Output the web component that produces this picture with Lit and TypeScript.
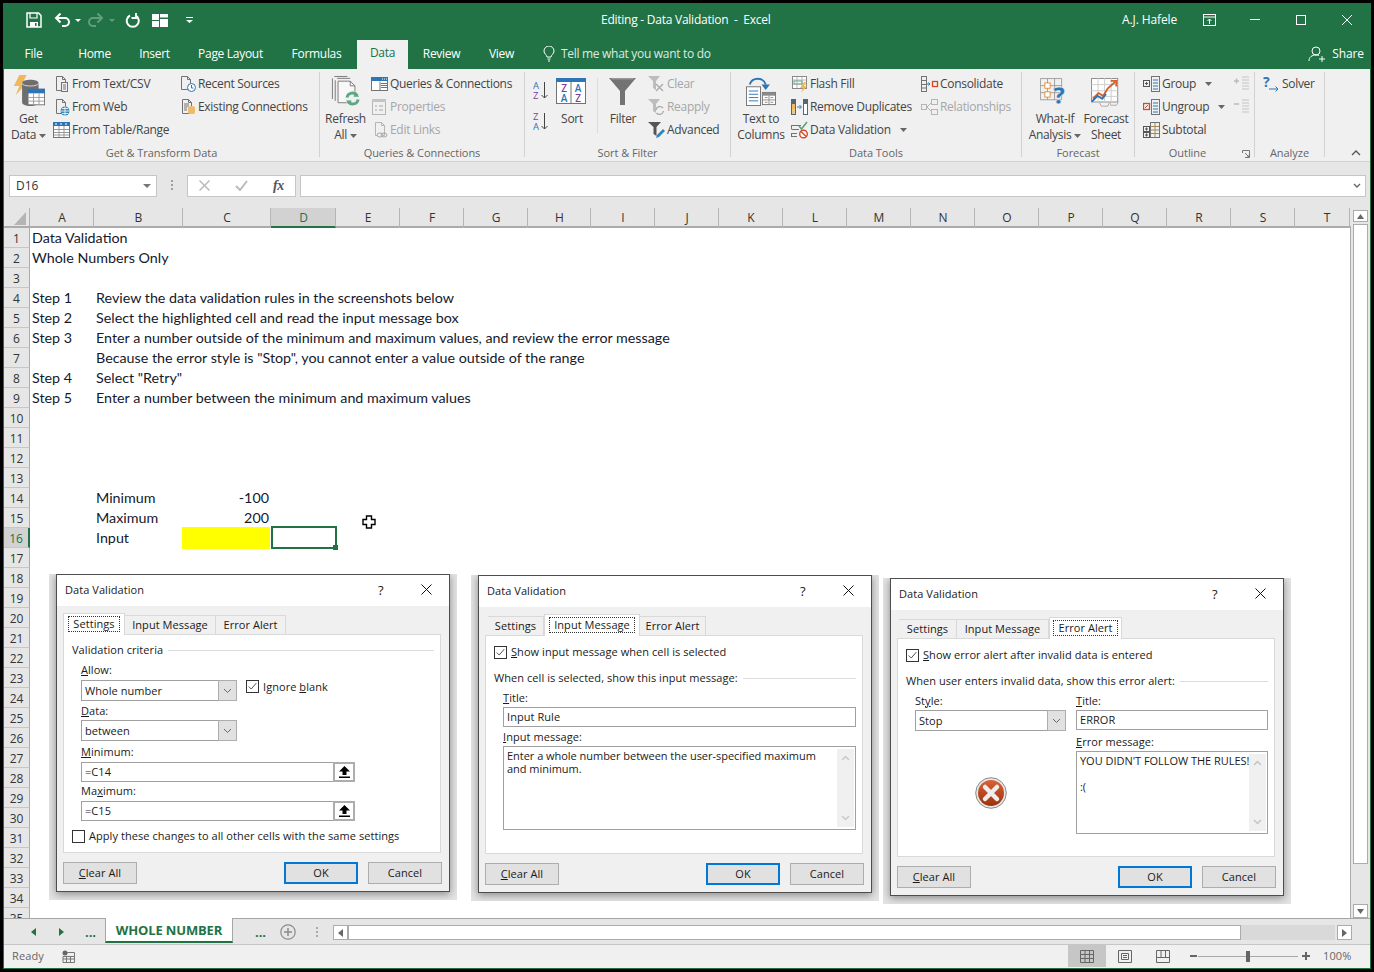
import { LitElement, html, css, nothing } from "lit";
import { customElement, property } from "lit/decorators.js";

const icons: Record<string, unknown> = {
  fromText: html`<svg width="18" height="18" viewBox="0 0 18 18" fill="none"><path d="M3.500 1.500h6l3 3v11h-9zM9.500 1.500v3h3" stroke="#737373"/><rect x="8.500" y="7.500" width="6" height="9" fill="#f0f0f0" stroke="#737373"/><path d="M10 10h3M10 12h3M10 14h3" stroke="#737373"/></svg>`,
  fromWeb: html`<svg width="18" height="18" viewBox="0 0 18 18" fill="none"><path d="M3.500 1.500h6l3 3v11h-9zM9.500 1.500v3h3" stroke="#737373"/><circle cx="12" cy="13" r="4.500" fill="#3a87b5"/><path d="M7.500 13h9M12 8.500v9M9 10.500h6M9 15.500h6" stroke="#fff" stroke-width=".8"/></svg>`,
  fromTable: html`<svg width="18" height="18" viewBox="0 0 18 18" fill="none"><rect x=".5" y="1.500" width="16" height="15" fill="#fff" stroke="#737373"/><rect x="0" y="1" width="17" height="4" fill="#2e75b6"/><path d="M2 3h2M7 3h2M12 3h2" stroke="#fff"/><path d="M1 8.500h15M1 11.500h15M1 14h15M6 5v11M11 5v11" stroke="#999"/></svg>`,
  recent: html`<svg width="18" height="18" viewBox="0 0 18 18" fill="none"><path d="M2.500 1.500h6l3 3v10h-9zM8.500 1.500v3h3" stroke="#737373"/><circle cx="12.500" cy="12.500" r="4" fill="#fff" stroke="#2e75b6"/><path d="M12.500 10v3h2" stroke="#2e75b6"/></svg>`,
  existing: html`<svg width="18" height="18" viewBox="0 0 18 18" fill="none"><path d="M3.500 1.500h6l3 3v11h-9zM9.500 1.500v3h3" stroke="#737373"/><path d="M5 6h5M5 8h5M5 10h3M5 12h3" stroke="#737373"/><path d="M9 9.500a3.500 1.500 0 0 1 7 0v5a3.500 1.500 0 0 1-7 0z" fill="#eebb6c"/></svg>`,
  queries: html`<svg width="18" height="18" viewBox="0 0 18 18" fill="none"><rect x=".5" y="2.500" width="16" height="13" fill="#fff" stroke="#737373"/><rect x="0" y="2" width="17" height="4" fill="#2e75b6"/><path d="M9 6.500v9M10 8.500h6M10 10.500h6M10 12.500h6" stroke="#737373"/><path d="M11 4h1M13 4h1M15 4h1" stroke="#fff"/></svg>`,
  properties: html`<svg width="18" height="18" viewBox="0 0 18 18" fill="none"><rect x="1.500" y="1.500" width="13" height="15" stroke="#b5b5b5"/><rect x="1" y="1" width="14" height="3" fill="#c4c4c4"/><path d="M4 8h2M4 12h2M8 8h4M8 12h4" stroke="#a8a8a8"/></svg>`,
  editLinks: html`<svg width="18" height="18" viewBox="0 0 18 18" fill="none"><path d="M4.500 1.500h6l3 3v10h-9zM10.500 1.500v3h3" stroke="#b5b5b5"/><ellipse cx="9" cy="14" rx="3" ry="2" fill="#f0f0f0" stroke="#a8a8a8"/><ellipse cx="13" cy="14" rx="3" ry="2" fill="none" stroke="#a8a8a8"/></svg>`,
  azSmall: html`<svg width="16" height="24" viewBox="0 0 16 24" fill="none"><text font-family="Open Sans" font-size="9.500"><tspan x="0" y="9" fill="#2e75b6">A</tspan><tspan x="0" y="18.500" fill="#7b3f98">Z</tspan></text><path d="M11.500 2v16M8.500 15l3 3 3-3" stroke="#444"/></svg>`,
  zaSmall: html`<svg width="16" height="24" viewBox="0 0 16 24" fill="none"><text font-family="Open Sans" font-size="9.500"><tspan x="0" y="9" fill="#7b3f98">Z</tspan><tspan x="0" y="18.500" fill="#2e75b6">A</tspan></text><path d="M11.500 2v16M8.500 15l3 3 3-3" stroke="#444"/></svg>`,
  clear: html`<svg width="18" height="18" viewBox="0 0 18 18" fill="none"><path d="M0 1h12l-4 5v9l-3-2V6z" fill="#bdbdbd"/><path d="M8 9l7 7M15 9l-7 7" stroke="#a8a8a8" stroke-width="1.300"/></svg>`,
  reapply: html`<svg width="18" height="18" viewBox="0 0 18 18" fill="none"><path d="M0 1h12l-4 5v9l-3-2V6z" fill="#bdbdbd"/><path d="M8 12a4 4 0 0 1 7-2M15.500 13a4 4 0 0 1-7 2" stroke="#a8a8a8" stroke-width="1.300"/></svg>`,
  advanced: html`<svg width="18" height="18" viewBox="0 0 18 18" fill="none"><path d="M0 1h13l-4.500 5v9l-3-2V6z" fill="#555"/><path d="M8 17l1-3 6-6 2 2-6 6z" fill="#2e86c1"/></svg>`,
  flash: html`<svg width="18" height="18" viewBox="0 0 18 18" fill="none"><rect x="1.500" y="1.500" width="14" height="12" fill="#fff" stroke="#8a8a8a"/><path d="M2 5h13M2 9h13M6 2v11M11 2v11" stroke="#b9b9b9"/><rect x="3" y="6" width="8" height="3" fill="none" stroke="#6aa887"/><path d="M13 7l-4 6h3l-2 5 6-7h-3l2-4z" fill="#efb85b"/></svg>`,
  removeDup: html`<svg width="18" height="18" viewBox="0 0 18 18" fill="none"><rect x="0" y="1" width="5" height="16" fill="#51667e"/><rect x="1" y="6" width="3" height="5" fill="#f0b85e"/><rect x="1" y="11" width="3" height="5" fill="#f0c77e"/><rect x="12" y="1" width="5" height="16" fill="#51667e"/><rect x="13" y="6" width="3" height="5" fill="#fff"/><rect x="13" y="11" width="3" height="5" fill="#fff"/><path d="M6 9h4M8.500 7l2 2-2 2" stroke="#2e75b6"/></svg>`,
  dataVal: html`<svg width="18" height="18" viewBox="0 0 18 18" fill="none"><path d="M1 4.500h9M1 8.500h7M1 12.500h5M1 15.500h5M.5 4v4.500M.5 12v4" stroke="#737373"/><path d="M8 5l2.500 3L16 1" stroke="#5aa07a" stroke-width="1.500"/><circle cx="12.500" cy="13" r="3.800" fill="#fff" stroke="#d2492a" stroke-width="1.400"/><path d="M10 10.500l5 5" stroke="#d2492a" stroke-width="1.400"/></svg>`,
  consolidate: html`<svg width="18" height="18" viewBox="0 0 18 18" fill="none"><rect x=".5" y="1.500" width="5" height="15" stroke="#737373"/><path d="M1 5.500h4M1 9.500h4M1 13h4" stroke="#737373"/><path d="M6 9h3M7.500 7.500L9 9l-1.500 1.500" stroke="#2e75b6"/><rect x="11.500" y="6.500" width="5" height="5" stroke="#d2492a" stroke-width="1.300"/></svg>`,
  relationships: html`<svg width="18" height="18" viewBox="0 0 18 18" fill="none"><rect x=".5" y="6.500" width="5" height="5" stroke="#b5b5b5"/><rect x="10.500" y="1.500" width="6" height="5" stroke="#b5b5b5"/><rect x="10.500" y="11.500" width="6" height="5" stroke="#b5b5b5"/><path d="M6 9l4-4M6 9l4 4" stroke="#b5b5b5"/></svg>`,
  group: html`<svg width="18" height="18" viewBox="0 0 18 18" fill="none"><rect x=".5" y="5.500" width="6" height="6" stroke="#555"/><path d="M2 8.500h3M3.500 7v3" stroke="#555"/><rect x="8.500" y="1.500" width="8" height="15" stroke="#737373"/><path d="M10 5h5M10 8h5M10 11h5M10 14h5" stroke="#2e75b6"/></svg>`,
  ungroup: html`<svg width="18" height="18" viewBox="0 0 18 18" fill="none"><rect x=".5" y="5.500" width="6" height="6" stroke="#d2492a" stroke-width="1.300"/><path d="M2 10l3-3" stroke="#d2492a"/><rect x="8.500" y="1.500" width="8" height="15" stroke="#737373"/><path d="M10 5h5M10 8h5M10 11h5M10 14h5" stroke="#2e75b6"/></svg>`,
  subtotal: html`<svg width="18" height="18" viewBox="0 0 18 18" fill="none"><rect x=".5" y="5.500" width="6" height="5" stroke="#555"/><rect x=".5" y="11.500" width="6" height="5" stroke="#555"/><path d="M2 8h3M3.500 6.500v3M2 14h3M3.500 12.500v3" stroke="#555"/><rect x="7.500" y="1.500" width="9" height="15" stroke="#737373"/><path d="M8 5.500h8M8 9h8M8 12.500h8M12 2v14" stroke="#a08a5a"/></svg>`,
  showD: html`<svg width="18" height="18" viewBox="0 0 18 18" fill="none"><path d="M1 6h5M3.500 3.500v5" stroke="#bbb" stroke-width="1.500"/><path d="M9 2h7M9 5h7M9 8h7M9 11h7M9 14h7" stroke="#c4c4c4"/></svg>`,
  hideD: html`<svg width="18" height="18" viewBox="0 0 18 18" fill="none"><path d="M1 6h5" stroke="#bbb" stroke-width="1.500"/><path d="M9 2h7M9 5h7M9 8h7M9 11h7M9 14h7" stroke="#c4c4c4"/></svg>`,
  solver: html`<svg width="18" height="18" viewBox="0 0 18 18" fill="none" style="overflow:visible"><text x="0" y="12" font-family="Open Sans" font-size="14" font-weight="700" fill="#2e75b6">?</text><path d="M6 14h9M12.500 11.500L15 14l-2.500 2.500" stroke="#2e75b6"/></svg>`,
  getData: html`<svg width="33" height="33" viewBox="0 0 36 36" fill="none"><path d="M8 0h8l-4 8h5L4 22l4-10H2z" fill="#efb85b"/><path d="M11 9c0-5 18-5 18 0v21c0 5-18 5-18 0z" fill="#6e6e6e"/><path d="M11 9c0 4 18 4 18 0" stroke="#ddd"/><rect x="17.500" y="15.500" width="18" height="17" fill="#fff" stroke="#737373"/><rect x="17" y="15" width="19" height="5" fill="#2e75b6"/><path d="M18 24.500h17M18 28.500h17M23.500 20v12M29.500 20v12" stroke="#999"/></svg>`,
  refresh: html`<svg width="30" height="32" viewBox="0 0 32 34" fill="none"><path d="M3.500 1.500h14M1.500 3.500v22" stroke="#777"/><path d="M6.500 3.500h14M4.500 5.500v22" stroke="#777"/><path d="M7.500 6.500h13l5 5v18h-18z" fill="#f8f8f8" stroke="#777"/><path d="M20.500 6.500v5h5" stroke="#777"/><circle cx="23" cy="25" r="8" fill="#f0f0f0"/><path d="M17 24a6 6 0 0 1 11-2M29 26a6 6 0 0 1-11 2" stroke="#5fa884" stroke-width="3"/><path d="M26 18l4 5h-6zM20 32l-4-5h6z" fill="#5fa884"/></svg>`,
  sort: html`<svg width="32" height="28" viewBox="0 0 32 28" fill="none"><rect x=".5" y="1.500" width="29" height="24" fill="#fff" stroke="#737373"/><rect x="0" y="0" width="30" height="4" fill="#2e75b6"/><path d="M15 4v21" stroke="#737373"/><text text-anchor="middle" font-family="Open Sans" font-size="10" font-weight="600"><tspan x="8" y="14" fill="#7b3f98">Z</tspan><tspan x="8" y="24" fill="#2e75b6">A</tspan><tspan x="22" y="14" fill="#2e75b6">A</tspan><tspan x="22" y="24" fill="#7b3f98">Z</tspan></text></svg>`,
  filter: html`<svg width="28" height="28" viewBox="0 0 28 28" fill="none"><path d="M0 0h27l-11 13v14h-5V13z" fill="#737373"/><path d="M2 0h23l-1 1.500H3z" fill="#999"/></svg>`,
  textCols: html`<svg width="30" height="32" viewBox="0 0 32 34" fill="none"><path d="M4 10a9 9 0 0 1 17 0" stroke="#2e75b6" stroke-width="2"/><path d="M16.500 10h9l-4.500 6z" fill="#2e75b6"/><rect x=".5" y="12.500" width="15" height="20" fill="#fff" stroke="#737373"/><path d="M3 17h10M3 20.500h10M3 24h10M3 27.500h10" stroke="#2e75b6"/><rect x="17.500" y="18.500" width="14" height="13" fill="#fff" stroke="#737373"/><rect x="18" y="19" width="13" height="3" fill="#8a8a8a"/><path d="M18 26.500h13M24.500 22v9M20 24h3M26 24h3M20 29h3M26 29h3" stroke="#8a8a8a"/></svg>`,
  whatIf: html`<svg width="30" height="32" viewBox="0 0 34 36" fill="none"><path d="M.5.5h24v24H.5zM8.500.5v24M16.500.5v24M.5 8.500h24M.5 16.500h24" stroke="#999"/><rect x="5.500" y="5.500" width="6" height="6" fill="#fff" stroke="#e08a2e"/><rect x="5.500" y="15.500" width="6" height="6" fill="#fff" stroke="#e08a2e"/><text x="15" y="29" font-family="Open Sans" font-size="26" font-weight="800" fill="#2e75b6" stroke="#f0f0f0" stroke-width=".5">?</text></svg>`,
  forecast: html`<svg width="30" height="32" viewBox="0 0 32 34" fill="none"><rect x=".5" y=".5" width="28" height="25" fill="#fff" stroke="#8a8a8a"/><path d="M.5 7h28M.5 13.500h28M.5 19.500h28M7.500 0v26M14.500 0v26M21.500 0v26" stroke="#ccc"/><path d="M2 22l6-6 5 3 5-8 8-7" stroke="#d2612a" stroke-width="2"/><path d="M21 3h6v6" stroke="#d2612a" stroke-width="2"/><path d="M1 25l6-6 5 3 4-5" stroke="#2e75b6" stroke-width="2"/><path d="M9 26l2 4h7l1-3M20 26l1 3h6l2-3" stroke="#aaa"/></svg>`,
};
const caret = html`<svg class="caret" width="7" height="4" viewBox="0 0 7 4"><path d="M0 0h7L3.500 4z" fill="#666"/></svg>`;

const ROWS: Record<number, { a?: string; b?: string; c?: string }> = {
  1: { a: "Data Validation" }, 2: { a: "Whole Numbers Only" },
  4: { a: "Step 1", b: "Review the data validation rules in the screenshots below" },
  5: { a: "Step 2", b: "Select the highlighted cell and read the input message box" },
  6: { a: "Step 3", b: "Enter a number outside of the minimum and maximum values, and review the error message" },
  7: { b: 'Because the error style is "Stop", you cannot enter a value outside of the range' },
  8: { a: "Step 4", b: 'Select "Retry"' },
  9: { a: "Step 5", b: "Enter a number between the minimum and maximum values" },
  14: { b: "Minimum", c: "-100" }, 15: { b: "Maximum", c: "200" }, 16: { b: "Input" },
};
const COLS: [string, number, number][] = [["A", 64, 1], ["B", 89, 1], ["C", 88, 1], ["D", 65, 1], ["E", 64, 1], ["F", 64, 1], ["G", 64, 1], ["H", 63, 1], ["I", 64, 1], ["J", 64, 1], ["K", 64, 1], ["L", 64, 1], ["M", 64, 1], ["N", 64, 1], ["O", 64, 1], ["P", 64, 1], ["Q", 64, 1], ["R", 64, 1], ["S", 64, 1], ["T", 55, 10]];
const TABS: [string, number, number][] = [["File", 59, 0], ["Home", 63, 0], ["Insert", 57, 0], ["Page Layout", 95, 0], ["Formulas", 77, 0], ["Data", 51, 2], ["Review", 67, 0], ["View", 53, 0]];

type Row = [string, string, boolean?, boolean?];

@customElement("dv-dialog")
class DvDialog extends LitElement {
  @property() tab = "settings";
  static styles = css`
    :host { display: block; font: 11px/14px "Open Sans", sans-serif; color: #1a1a1a; letter-spacing: .06px; }
    .win { margin-left: 7px; width: 394px; height: 318px; box-sizing: border-box; border: 1px solid #4d4d4d; background: #f0f0f0; box-shadow: 0 2px 8px rgba(0,0,0,.4); }
    .head { height: 31px; padding-bottom: 2px; box-sizing: border-box; background: #fff; display: flex; align-items: center; padding-left: 8px; }
    .head .t { flex: 1; }
    .head .q { width: 43px; font-size: 13px; }
    .head svg { margin-right: 17px; }
    .tabs { height: 28px; display: flex; align-items: flex-end; padding-left: 6px; position: relative; z-index: 1; }
    .tab { height: 19px; box-sizing: border-box; border-top: 1px solid #d9d9d9; border-right: 1px solid #d9d9d9; display: flex; align-items: center; justify-content: center; background: #f0f0f0; flex: none; }
    .tab.on { height: 22px; background: #fff; border-left: 1px solid #d9d9d9; margin-bottom: -1px; padding-bottom: 2px; }
    .tab.on span { outline: 1px dotted #333; padding: 0 4px; }
    .panel { margin-left: 6px; width: 378px; height: 219px; box-sizing: border-box; border: 1px solid #d9d9d9; background: #fff; padding: 0 8px; }
    .foot { display: flex; margin: 9px 0 0 6px; width: 379px; }
    .btn { width: 74px; height: 22px; box-sizing: border-box; border: 1px solid #adadad; background: #e1e1e1; display: flex; align-items: center; justify-content: center; }
    .btn.ok { border: 2px solid #0078d7; margin-left: auto; margin-right: 10px; }
    .sec { display: flex; align-items: center; gap: 5px; white-space: nowrap; }
    .sec i { flex: 1; height: 1px; background: #dcdcdc; margin-right: -2px; }
    .ind { padding-left: 9px; }
    .lb { display: block; white-space: nowrap; }
    .cb { display: flex; align-items: center; gap: 4px; white-space: nowrap; height: 14px; }
    .box { width: 13px; height: 13px; box-sizing: border-box; border: 1px solid #333; background: #fff; flex: none; display: block; }
    .combo { display: flex; box-sizing: border-box; height: 21px; border: 1px solid #a0a0a0; background: #fff; align-items: center; padding-left: 3px; }
    .combo span { flex: 1; }
    .combo b { width: 17px; height: 19px; background: #e1e1e1; box-shadow: 0 0 0 1px #adadad; display: flex; align-items: center; justify-content: center; }
    .inp { display: flex; box-sizing: border-box; height: 20px; border: 1px solid #a0a0a0; background: #fff; align-items: center; padding-left: 3px; }
    .ref { display: flex; align-items: center; }
    .ref .inp { width: 252px; border-right: 0; }
    .ref b { width: 22px; height: 20px; box-sizing: border-box; border: 2px solid #adadad; background: #fff; display: flex; align-items: center; justify-content: center; }
    .ta { box-sizing: border-box; border: 1px solid #a0a0a0; background: #fff; padding: 2px 0 0 3px; position: relative; line-height: 13px; white-space: pre-wrap; letter-spacing: -.03px; }
    .sb { position: absolute; right: 1px; top: 2px; bottom: 2px; width: 17px; background: #f0f0f0; display: flex; flex-direction: column; justify-content: space-between; align-items: center; padding: 6px 0; box-sizing: border-box; }
    .err { display: flex; }
    .err .l { width: 161px; flex: none; }
    .err .r { width: 192px; flex: none; }
    u { text-underline-offset: 1px; }
  `;
  private chev = html`<svg width="9" height="6" viewBox="0 0 9 6" fill="none"><path d="M1 1l3.500 3.500L8 1" stroke="#666"/></svg>`;
  private check = html`<svg class="box" viewBox="0 0 13 13" fill="none"><path d="M2 6.500l3 3 6-7" stroke="#333"/></svg>`;
  private up = html`<svg width="11" height="12" viewBox="0 0 11 12"><path d="M5.500 0L11 5.500H7.500V9h-4V5.500H0zM0 10.500h11V12H0z" fill="#000"/></svg>`;
  private sbar(dim = "#c9c9c9") {
    return html`<div class="sb"><svg width="9" height="6" viewBox="0 0 9 6" fill="none"><path d="M1 5l3.500-3.500L8 5" stroke=${dim} stroke-width="1.500"/></svg><svg width="9" height="6" viewBox="0 0 9 6" fill="none"><path d="M1 1l3.500 3.500L8 1" stroke=${dim} stroke-width="1.500"/></svg></div>`;
  }
  private settings() {
    return html`
      <div class="sec" style="padding-top:8px"><span>Validation criteria</span><i></i></div>
      <div class="ind">
        <span class="lb" style="margin-top:6px"><u>A</u>llow:</span>
        <div style="display:flex;margin-top:3px">
          <div class="combo" style="width:156px"><span>Whole number</span><b>${this.chev}</b></div>
          <div class="cb" style="margin-left:9px;height:13px;margin-top:0;align-items:flex-start">${this.check}<span><span>Ignore </span><u>b</u>lank</span></div>
        </div>
        <span class="lb" style="margin-top:3px"><u>D</u>ata:</span>
        <div class="combo" style="width:156px;margin-top:2px"><span>between</span><b>${this.chev}</b></div>
        <span class="lb" style="margin-top:4px"><u>M</u>inimum:</span>
        <div class="ref" style="margin-top:3px"><div class="inp">=C14</div><b>${this.up}</b></div>
        <span class="lb" style="margin-top:2px">Ma<u>x</u>imum:</span>
        <div class="ref" style="margin-top:3px"><div class="inp">=C15</div><b>${this.up}</b></div>
      </div>
      <div class="cb" style="margin-top:8px"><span class="box"></span><span>Apply these changes to all other cells with the same settings</span></div>
    `;
  }
  private input() {
    return html`
      <div class="cb" style="margin-top:9px">${this.check}<span><u>S</u>how input message when cell is selected</span></div>
      <div class="sec" style="margin-top:12px"><span>When cell is selected, show this input message:</span><i></i></div>
      <div class="ind">
        <span class="lb" style="margin-top:6px"><u>T</u>itle:</span>
        <div class="inp" style="margin-top:2px;width:353px">Input Rule</div>
        <span class="lb" style="margin-top:3px"><u>I</u>nput message:</span>
        <div class="ta" style="margin-top:2px;width:353px;height:84px;padding-right:26px">Enter a whole number between the user-specified maximum and minimum.${this.sbar()}</div>
      </div>
    `;
  }
  private error() {
    return html`
      <div class="cb" style="margin-top:9px">${this.check}<span><u>S</u>how error alert after invalid data is entered</span></div>
      <div class="sec" style="margin-top:12px"><span>When user enters invalid data, show this error alert:</span><i></i></div>
      <div class="ind err">
        <div class="l">
          <span class="lb" style="margin-top:6px">St<u>y</u>le:</span>
          <div class="combo" style="width:151px;margin-top:2px"><span>Stop</span><b>${this.chev}</b></div>
          <svg style="display:block;margin:46px 0 0 60px" width="32" height="32" viewBox="0 0 32 32"><defs><linearGradient id="eg" x1="0" y1="0" x2="0" y2="1"><stop offset="0" stop-color="#d9623a"/><stop offset="1" stop-color="#9c3208"/></linearGradient></defs><circle cx="16" cy="16" r="15.300" fill="#e8e8e8" stroke="#8a8a8a"/><circle cx="16" cy="16" r="13" fill="url(#eg)"/><path d="M10 10l12 12M22 10L10 22" stroke="#eee" stroke-width="4.500" stroke-linecap="round"/></svg>
        </div>
        <div class="r">
          <span class="lb" style="margin-top:6px"><u>T</u>itle:</span>
          <div class="inp" style="margin-top:2px">ERROR</div>
          <span class="lb" style="margin-top:5px"><u>E</u>rror message:</span>
          <div class="ta" style="margin-top:2px;height:83px">YOU DIDN'T FOLLOW THE RULES!

:(${this.sbar("#c4c4c4")}</div>
        </div>
      </div>
    `;
  }
  render() {
    const t = this.tab;
    const setW = t === "settings" ? "width:62px" : t === "input" ? "width:56px;margin-left:3px" : "width:58px;margin-left:2px";
    const inW = t === "input" ? "width:96px" : t === "settings" ? "width:91px" : "width:92px";
    const erW = t === "error" ? "width:73px" : t === "settings" ? "width:70px" : "width:66px";
    return html`<div class="win">
      <div class="head"><span class="t">Data Validation</span><span class="q">?</span><svg width="11" height="11" viewBox="0 0 11 11" fill="none"><path d="M.5.5l10 10M10.500.5l-10 10" stroke="#111"/></svg></div>
      <div class="tabs">
        <div class="tab ${t === "settings" ? "on" : ""}" style=${setW}><span>Settings</span></div>
        <div class="tab ${t === "input" ? "on" : ""}" style=${inW}><span>Input Message</span></div>
        <div class="tab ${t === "error" ? "on" : ""}" style=${erW}><span>Error Alert</span></div>
      </div>
      <div class="panel">${t === "settings" ? this.settings() : t === "input" ? this.input() : this.error()}</div>
      <div class="foot"><div class="btn"><span><u>C</u>lear All</span></div><div class="btn ok">OK</div><div class="btn">Cancel</div></div>
    </div>`;
  }
}

@customElement("app-root")
class AppRoot extends LitElement {
  static styles = css`
    :host { display: block; position: relative; width: 1374px; height: 972px; background: #000; padding: 3px; box-sizing: border-box; font: 12px/16px "Open Sans", sans-serif; color: #444; overflow: hidden; letter-spacing: -.3px; }
    .app { width: 1368px; height: 966px; box-sizing: border-box; border: 1px solid #217346; border-top: 0; display: flex; flex-direction: column; background: #e6e6e6; }
    .title { height: 37px; padding-bottom: 3px; box-sizing: border-box; background: #217346; color: #fff; display: flex; align-items: center; flex: none; position: relative; letter-spacing: -.25px; }
    .qat { display: flex; align-items: center; width: 597px; flex: none; }
    .qi { display: flex; align-items: center; justify-content: center; flex: none; }
    .ttl { width: 300px; flex: none; white-space: pre; }
    .user { margin-left: 221px; width: 73px; letter-spacing: -.1px; }
    .win-btn { width: 46px; display: flex; justify-content: center; flex: none; }
    .tabs { height: 29px; background: #217346; color: #fff; display: flex; align-items: flex-end; flex: none; }
    .tb { height: 29px; display: flex; align-items: center; justify-content: center; flex: none; padding-bottom: 2px; box-sizing: border-box; }
    .tb.on { background: #f0f0f0; color: #217346; height: 30px; padding-bottom: 3px; }
    .tell { margin-left: 15px; display: flex; align-items: center; gap: 6px; height: 29px; padding-bottom: 2px; box-sizing: border-box; color: #dcebe3; flex: 1; }
    .share { display: flex; align-items: center; gap: 6px; height: 29px; padding-bottom: 2px; box-sizing: border-box; margin-right: 6px; letter-spacing: -.1px; }
    .ribbon { height: 93px; flex: none; background: #f0f0f0; border-bottom: 1px solid #d2d2d2; box-sizing: border-box; display: flex; padding-top: 3px; position: relative; }
    .grp { height: 85px; border-right: 1px solid #d2d2d2; box-sizing: border-box; flex: none; display: flex; flex-direction: column; position: relative; }
    .gb { height: 70px; display: flex; flex: none; }
    .gl { text-align: center; margin-top: 4px; line-height: 14px; font-size: 11px; color: #666; letter-spacing: -.05px; }
    .big { display: flex; flex-direction: column; align-items: center; flex: none; }
    .bi { height: 39px; padding-top: 3px; box-sizing: border-box; display: flex; align-items: flex-start; justify-content: center; flex: none; }
    .bi.low { padding-top: 6px; }
    .bl { text-align: center; line-height: 16px; white-space: nowrap; }
    .col { display: flex; flex-direction: column; flex: none; }
    .sm { height: 23px; display: flex; align-items: center; white-space: nowrap; }
    .sm svg { flex: none; }
    .sm .x { margin-left: 1px; }
    .sm.dis { color: #a6a6a6; }
    .caret { margin-left: 3px; vertical-align: middle; }
    .sm .caret { margin-left: 9px; }
    .sep { width: 1px; height: 55px; margin: 6px 0 0 0; background: #dcdcdc; flex: none; }
    .fbar { height: 46px; flex: none; display: flex; align-items: center; padding-top: 1px; box-sizing: border-box; background: #e6e6e6; }
    .namebox { width: 148px; height: 22px; margin-left: 5px; box-sizing: border-box; border: 1px solid #c6c6c6; background: #fff; display: flex; align-items: center; padding: 0 5px 0 6px; color: #333; justify-content: space-between; letter-spacing: 0; }
    .dots { width: 30px; display: flex; justify-content: center; flex: none; }
    .fxb { width: 109px; height: 22px; box-sizing: border-box; border: 1px solid #c6c6c6; background: #fff; display: flex; align-items: center; flex: none; justify-content: space-between; padding: 0 11px; }
    .fx { font: italic 700 14px "Liberation Serif", serif; color: #555; }
    .finput { width: 1066px; height: 22px; margin-left: 4px; box-sizing: border-box; border: 1px solid #c6c6c6; background: #fff; display: flex; align-items: center; justify-content: flex-end; padding-right: 4px; flex: none; }
    .sheet { height: 710px; flex: none; display: flex; background: #fff; }
    .main { width: 1347px; flex: none; display: flex; flex-direction: column; }
    .chead { height: 20px; display: flex; flex: none; background: #e6e6e6; box-sizing: border-box; border-bottom: 2px solid #ababab; }
    .corner { width: 26px; flex: none; border-right: 1px solid #b0b0b0; box-sizing: border-box; display: flex; align-items: flex-end; justify-content: flex-end; padding: 0 3px 1px 0; }
    .ch { box-sizing: border-box; border-right: 1px solid #b5b5b5; text-align: center; line-height: 19px; flex: none; color: #333; height: 20px; letter-spacing: 0; }
    .ch.on { background: #d2d2d2; border-bottom: 2px solid #217346; color: #217346; }
    .grid { flex: 1; overflow: hidden; border-right: 1px solid #ababab; }
    .row { height: 20px; display: grid; grid-template-columns: 26px 64px 89px 88px 65px 1fr; font: 14.3px/20px Lato, sans-serif; color: #14192b; letter-spacing: 0; }
    .rh { background: #e6e6e6; border-right: 1px solid #ababab; border-bottom: 1px solid #c6c6c6; box-sizing: border-box; text-align: center; font: 12px/21px "Open Sans", sans-serif; color: #333; height: 20px; overflow: hidden; }
    .rh.on { background: #d2d2d2; color: #217346; border-right: 2px solid #217346; }
    .c { padding-left: 2px; white-space: nowrap; min-width: 0; }
    .c.r { text-align: right; padding: 0 2px 0 0; }
    .c.y { background: #ffff00; margin: -1px 1px 0 -1px; }
    .c.act { border: 2px solid #217346; box-sizing: border-box; margin: -2px -1px 0 0; height: 23px; position: relative; }
    .c.act i { position: absolute; right: -3px; bottom: -3px; width: 5px; height: 5px; background: #217346; }
    .vsb { flex: 1; background: #e6e6e6; position: relative; display: flex; flex-direction: column; padding: 2px 2px 0 2px; box-sizing: border-box; gap: 2px; }
    .sbtn { box-sizing: border-box; border: 1px solid #ababab; background: #fff; display: flex; align-items: center; justify-content: center; flex: none; }
    .thumb { background: #fff; border: 1px solid #ababab; box-sizing: border-box; flex: none; }
    .stabs { height: 27px; flex: none; display: flex; align-items: flex-start; background: #e6e6e6; border-top: 1px solid #a6a6a6; box-sizing: border-box; border-bottom: 1px solid #c6c6c6; position: relative; }
    .st { width: 128px; height: 25px; margin-top: -1px; background: #fff; border: 1px solid #a6a6a6; border-top: 0; border-bottom: 2px solid #217346; box-sizing: border-box; color: #217346; font-weight: 700; font-size: 13px; display: flex; align-items: center; justify-content: center; flex: none; letter-spacing: -.15px; padding-top: 1px; }
    .nav { display: flex; align-items: center; justify-content: center; height: 25px; flex: none; color: #217346; font-weight: 700; font-size: 13px; letter-spacing: 0; }
    .hs { margin-top: 6px; display: flex; align-items: center; flex: none; height: 15px; }
    .status { height: 23px; flex: 1; padding-bottom: 1px; box-sizing: border-box; background: #f0f0f0; display: flex; align-items: center; color: #666; font-size: 11px; letter-spacing: .1px; }
    .vb { display: flex; align-items: center; justify-content: center; height: 100%; width: 38px; flex: none; }
    .vb.on { background: #c6c6c6; }
    .shot { position: absolute; width: 408px; height: 326px; overflow: hidden; background-color: #fbfbfb; background-image: linear-gradient(#e3e3e3, #e3e3e3), linear-gradient(#e3e3e3, #e3e3e3); background-size: 100% 1px, 1px 100%; }
    .gridbg { background-size: 64px 20px; }
    .cursor { position: absolute; left: 362px; top: 515px; display: block; }
    .tiny { position: absolute; }
  `;

  private big(w: number, icon: string, lines: string[], car = false, low = false) {
    return html`<div class="big" style="width:${w}px"><div class="bi ${low ? "low" : ""}">${icons[icon]}</div>
      ${lines.map((l, i) => html`<div class="bl">${l}${car && i === lines.length - 1 ? caret : nothing}</div>`)}</div>`;
  }
  private col(w: number, rows: Row[]) {
    return html`<div class="col" style="width:${w}px">${rows.map(([ic, t, dis, car]) => html`<div class="sm ${dis ? "dis" : ""}">${icons[ic]}${t ? html`<span class="x">${t}</span>` : nothing}${car ? caret : nothing}</div>`)}</div>`;
  }
  private grp(w: number, label: string, body: unknown, extra: unknown = nothing, labelPad = 0) {
    return html`<div class="grp" style="width:${w}px"><div class="gb">${body}</div><div class="gl" style="padding-right:${labelPad}px">${label}</div>${extra}</div>`;
  }

  private qat() {
    return html`<div class="qat">
      <div class="qi" style="width:59px"><svg width="16" height="16" viewBox="0 0 16 16" fill="none"><path d="M1 1h11.500L15 3.500V15H1z" stroke="#fff" stroke-width="1.500"/><path d="M4 1v5h7V1" stroke="#fff" stroke-width="1.200"/><rect x="4" y="10" width="8" height="5" fill="#fff"/><rect x="9" y="11" width="1.500" height="3" fill="#217346"/></svg></div>
      <div class="qi" style="width:17px;margin-left:-9px"><svg width="17" height="14" viewBox="0 0 17 14" fill="none"><path d="M2 5h9a4 4 0 0 1 0 8H8" stroke="#fff" stroke-width="2"/><path d="M6.500.5L2 5l4.500 4.500" stroke="#fff" stroke-width="2"/></svg></div>
      <div class="qi" style="width:14px"><svg width="6" height="3" viewBox="0 0 6 3"><path d="M0 0h6L3 3z" fill="#fff"/></svg></div>
      <div class="qi" style="width:20px;opacity:.3"><svg width="17" height="14" viewBox="0 0 17 14" fill="none"><path d="M15 5H6a4 4 0 0 0 0 8h3" stroke="#fff" stroke-width="2"/><path d="M10.500.5L15 5l-4.500 4.500" stroke="#fff" stroke-width="2"/></svg></div>
      <div class="qi" style="width:14px;opacity:.3"><svg width="6" height="3" viewBox="0 0 6 3"><path d="M0 0h6L3 3z" fill="#fff"/></svg></div>
      <div class="qi" style="width:22px;margin-left:2px"><svg width="15" height="15" viewBox="0 0 15 15" fill="none"><path d="M5 2.500a6 6 0 1 0 5.500 0" stroke="#fff" stroke-width="2"/><path d="M11 0v5H6.500" stroke="#fff" stroke-width="1.800"/></svg></div>
      <div class="qi" style="width:34px"><svg width="16" height="13" viewBox="0 0 16 13" fill="#fff"><rect width="7" height="6"/><rect y="7" width="7" height="6"/><rect x="8" width="8" height="3.500"/><rect x="8" y="5" width="8" height="8"/></svg></div>
      <div class="qi" style="width:24px"><svg width="7" height="6" viewBox="0 0 7 6" fill="#fff"><rect width="7" height="1"/><path d="M0 3h7L3.500 6z"/></svg></div>
    </div>`;
  }

  render() {
    const rowNums = Array.from({ length: 35 }, (_, i) => i + 1);
    const arrowUp = html`<svg width="7" height="5" viewBox="0 0 7 5"><path d="M3.500 0L7 5H0z" fill="#666"/></svg>`;
    const arrowDn = html`<svg width="7" height="5" viewBox="0 0 7 5"><path d="M3.500 5L7 0H0z" fill="#666"/></svg>`;
    return html`<div class="app">
      <div class="title">
        ${this.qat()}
        <div class="ttl">Editing - Data Validation  -  Excel</div>
        <div class="user">A.J. Hafele</div>
        <div class="win-btn" style="margin-left:-5px"><svg width="13" height="12" viewBox="0 0 13 12" fill="none"><rect x=".5" y=".5" width="12" height="11" stroke="#fff"/><path d="M1 3h11M6.500 10V5M4.500 7l2-2 2 2" stroke="#fff"/></svg></div>
        <div class="win-btn"><svg width="10" height="2" viewBox="0 0 10 2"><rect width="10" height="1" fill="#fff"/></svg></div>
        <div class="win-btn"><svg width="10" height="10" viewBox="0 0 10 10" fill="none"><rect x=".5" y=".5" width="9" height="9" stroke="#fff"/></svg></div>
        <div class="win-btn"><svg width="10" height="10" viewBox="0 0 10 10" fill="none"><path d="M0 0l10 10M10 0L0 10" stroke="#fff"/></svg></div>
      </div>
      <div class="tabs">
        ${TABS.map(([t, w, ml]) => html`<div class="tb ${t === "Data" ? "on" : ""}" style="width:${w}px;margin-left:${ml}px">${t}</div>`)}
        <div class="tell"><svg width="12" height="16" viewBox="0 0 12 16" fill="none"><path d="M4 11c0-2-3-3-3-6a5 5 0 0 1 10 0c0 3-3 4-3 6zM4.500 13h3M5 15h2" stroke="#fff"/></svg><span>Tell me what you want to do</span></div>
        <div class="share"><svg width="18" height="16" viewBox="0 0 18 16" fill="none"><circle cx="8" cy="5" r="4" stroke="#fff"/><path d="M1 15c0-4 3-6 7-6 1 0 2 .2 3 .5M11 13h6M14 10v6" stroke="#fff"/></svg><span>Share</span></div>
      </div>
      <div class="ribbon">
        ${this.grp(316, "Get & Transform Data", html`
          ${this.big(49, "getData", ["Get", "Data"], true)}
          ${this.col(126, [["fromText", "From Text/CSV"], ["fromWeb", "From Web"], ["fromTable", "From Table/Range"]])}
          ${this.col(130, [["recent", "Recent Sources"], ["existing", "Existing Connections"]])}
        `)}
        ${this.grp(205, "Queries & Connections", html`
          ${this.big(51, "refresh", ["Refresh", "All"], true)}
          ${this.col(150, [["queries", "Queries & Connections"], ["properties", "Properties", true], ["editLinks", "Edit Links", true]])}
        `)}
        ${this.grp(206, "Sort & Filter", html`
          <div class="col" style="width:8px"></div>
          <div class="col" style="width:20px;padding-top:8px;gap:7px">${icons.azSmall}${icons.zaSmall}</div>
          ${this.big(38, "sort", ["Sort"], false, true)}
          <div class="col" style="width:6px"></div>
          <div class="sep"></div>
          ${this.big(50, "filter", ["Filter"], false, true)}
          ${this.col(80, [["clear", "Clear", true], ["reapply", "Reapply", true], ["advanced", "Advanced"]])}
        `)}
        ${this.grp(291, "Data Tools", html`
          ${this.big(60, "textCols", ["Text to", "Columns"])}
          ${this.col(130, [["flash", "Flash Fill"], ["removeDup", "Remove Duplicates"], ["dataVal", "Data Validation", false, true]])}
          ${this.col(96, [["consolidate", "Consolidate"], ["relationships", "Relationships", true]])}
        `)}
        ${this.grp(113, "Forecast", html`
          <div class="col" style="width:7px"></div>
          ${this.big(52, "whatIf", ["What-If", "Analysis"], true, true)}
          ${this.big(50, "forecast", ["Forecast", "Sheet"], false, true)}
        `)}
        ${this.grp(120, "Outline", html`
          <div class="col" style="width:8px"></div>
          ${this.col(90, [["group", "Group", false, true], ["ungroup", "Ungroup", false, true], ["subtotal", "Subtotal"]])}
          ${this.col(20, [["showD", ""], ["hideD", ""]])}
        `, html`<svg class="tiny" style="right:4px;bottom:-1px" width="8" height="8" viewBox="0 0 8 8" fill="none"><path d="M.5 3V.5H7.500V7.500H3M3 3l4 4M5 7h2V5" stroke="#777"/></svg>`, 14)}
        ${this.grp(70, "Analyze", html`
          <div class="col" style="width:8px"></div>
          ${this.col(60, [["solver", "Solver"]])}
        `)}
        <svg class="tiny" style="left:1347px;top:81px" width="10" height="6" viewBox="0 0 10 6" fill="none"><path d="M1 5l4-4 4 4" stroke="#555" stroke-width="1.300"/></svg>
      </div>
      <div class="fbar">
        <div class="namebox"><span>D16</span><svg width="8" height="4" viewBox="0 0 8 4"><path d="M0 0h8L4 4z" fill="#777"/></svg></div>
        <div class="dots"><svg width="3" height="11" viewBox="0 0 3 11" fill="#a0a0a0"><rect width="2" height="2"/><rect y="4" width="2" height="2"/><rect y="8" width="2" height="2"/></svg></div>
        <div class="fxb">
          <svg width="11" height="11" viewBox="0 0 11 11" fill="none"><path d="M.5.5l10 10M10.500.5l-10 10" stroke="#bbb" stroke-width="1.500"/></svg>
          <svg width="13" height="11" viewBox="0 0 13 11" fill="none"><path d="M1 6l4 4 7-9" stroke="#bbb" stroke-width="2"/></svg>
          <span class="fx">fx</span>
        </div>
        <div class="finput"><svg width="8" height="6" viewBox="0 0 8 6" fill="none"><path d="M1 1l3 3 3-3" stroke="#666" stroke-width="1.400"/></svg></div>
      </div>
      <div class="sheet">
        <div class="main">
          <div class="chead">
            <div class="corner"><svg width="12" height="13" viewBox="0 0 12 13"><path d="M12 0v13H0z" fill="#b4b4b4"/></svg></div>
            ${COLS.map(([c, w, p]) => html`<div class="ch ${c === "D" ? "on" : ""}" style="width:${w}px;padding-left:${p}px">${c}</div>`)}
          </div>
          <div class="grid">
            ${rowNums.map((n) => {
              const r = ROWS[n] || {};
              return html`<div class="row">
                <div class="rh ${n === 16 ? "on" : ""}">${n}</div>
                <div class="c">${r.a ?? ""}</div>
                <div class="c">${r.b ?? ""}</div>
                <div class="c ${n === 16 ? "y" : "r"}">${r.c ?? ""}</div>
                <div class="c ${n === 16 ? "act" : ""}">${n === 16 ? html`<i></i>` : ""}</div>
                <div class="c"></div>
              </div>`;
            })}
          </div>
        </div>
        <div class="vsb">
          <div class="sbtn" style="height:12px">${arrowUp}</div>
          <div class="thumb" style="height:640px"></div>
          <div class="sbtn" style="height:14px;margin-top:auto">${arrowDn}</div>
        </div>
      </div>
      <div class="stabs">
        <div class="nav" style="width:8px;margin-left:25px"><svg width="5" height="8" viewBox="0 0 5 8"><path d="M5 0v8L0 4z" fill="#217346"/></svg></div>
        <div class="nav" style="width:8px;margin-left:20px"><svg width="5" height="8" viewBox="0 0 5 8"><path d="M0 0v8l5-4z" fill="#217346"/></svg></div>
        <div class="nav" style="width:11px;margin:0 9px 0 20px">...</div>
        <div class="st">WHOLE NUMBER</div>
        <div class="nav" style="width:11px;margin-left:22px">...</div>
        <div class="nav" style="width:16px;margin-left:14px"><svg width="16" height="16" viewBox="0 0 16 16" fill="none"><circle cx="8" cy="8" r="7.200" stroke="#8a8a8a" stroke-width="1.200"/><path d="M8 4v8M4 8h8" stroke="#8a8a8a" stroke-width="1.500"/></svg></div>
        <div class="nav" style="width:2px;margin:0 15px 0 20px"><svg width="2" height="10" viewBox="0 0 2 10" fill="#aaa"><rect width="2" height="2"/><rect y="4" width="2" height="2"/><rect y="8" width="2" height="2"/></svg></div>
        <div class="hs">
          <div class="sbtn" style="width:15px;height:15px"><svg width="5" height="8" viewBox="0 0 5 8"><path d="M5 0v8L0 4z" fill="#666"/></svg></div>
          <div class="thumb" style="width:893px;height:15px"></div>
          <div style="width:94px;height:15px;background:#d9d9d9"></div>
          <div class="sbtn" style="width:15px;height:15px;margin-left:2px"><svg width="5" height="8" viewBox="0 0 5 8"><path d="M0 0v8l5-4z" fill="#666"/></svg></div>
        </div>
      </div>
      <div class="status">
        <span style="margin-left:8px;width:44px">Ready</span>
        <svg style="margin-left:6px" width="13" height="13" viewBox="0 0 13 13" fill="none"><circle cx="3" cy="3" r="2.500" fill="#666"/><path d="M5 2.500h7.500v10H1V6.500h11.500M1 9h11.500M4.500 6.500v6M8.500 6.500v6" stroke="#777"/></svg>
        <div style="flex:none;width:993px"></div>
        <div class="vb on"><svg width="14" height="13" viewBox="0 0 14 13" fill="none"><path d="M.5.5h13v12H.5zM.5 4.500h13M.5 8.500h13M5 .5v12M9.500.5v12" stroke="#666"/></svg></div>
        <div class="vb"><svg width="14" height="13" viewBox="0 0 14 13" fill="none"><path d="M.5.5h13v12H.5zM3.500 3.500h7v6h-7zM5 5.500h4M5 7.500h4" stroke="#666"/></svg></div>
        <div class="vb"><svg width="14" height="13" viewBox="0 0 14 13" fill="none"><path d="M.5.5h13v12H.5zM.5 7.500h13M5 .5v7M9.500.5v7" stroke="#666"/></svg></div>
        <svg style="margin-left:8px" width="7" height="2" viewBox="0 0 7 2"><rect width="7" height="2" fill="#666"/></svg>
        <div style="position:relative;margin-left:1px;width:100px;height:1px;background:#a8a8a8;flex:none"><i style="position:absolute;left:48px;top:-5px;width:4px;height:11px;background:#666"></i></div>
        <svg style="margin-left:4px" width="8" height="8" viewBox="0 0 8 8"><path d="M3 0h2v3h3v2H5v3H3V5H0V3h3z" fill="#666"/></svg>
        <span style="margin-left:13px">100%</span>
      </div>
    </div>

    <div class="shot gridbg" style="left:49px;top:574px;background-position:0 6px,42px 0"><dv-dialog tab="settings"></dv-dialog></div>
    <div class="shot gridbg" style="left:471px;top:575px;background-position:0 6px,41px 0"><dv-dialog tab="input"></dv-dialog></div>
    <div class="shot gridbg" style="left:883px;top:578px;background-position:0 6px,41px 0"><dv-dialog tab="error"></dv-dialog></div>
    <svg class="cursor" width="14" height="14" viewBox="0 0 14 14"><path d="M4.500 1h5v3.500H13v5H9.500V13h-5V9.500H1v-5h3.500z" fill="#fff" stroke="#000" stroke-width="1.400"/></svg>`;
  }
}
